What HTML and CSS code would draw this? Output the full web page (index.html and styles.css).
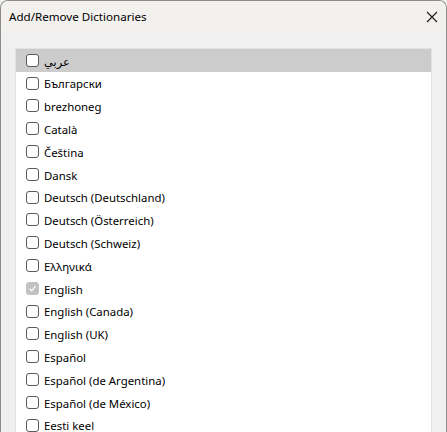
FILE: index.html
```html
<!DOCTYPE html>
<html lang="en">
<head>
  <meta charset="UTF-8">
  <title>Add/Remove Dictionaries</title>
  <link rel="stylesheet" href="styles.css">
</head>
<body>

  <div class="window">
    <div class="titlebar">
      <span class="title">Add/Remove Dictionaries</span>
      <svg class="close" width="12" height="12" viewBox="0 0 12 12">
        <path d="M1 1 L11 11 M11 1 L1 11" stroke="#1a1a1a" stroke-width="1.1" fill="none"/>
      </svg>
    </div>

    <div class="content">
      <div class="dict-list">
        <div class="row selected"><span class="box"></span><span class="label" dir="rtl">عربي</span></div>
        <div class="row"><span class="box"></span><span class="label">Български</span></div>
        <div class="row"><span class="box"></span><span class="label">brezhoneg</span></div>
        <div class="row"><span class="box"></span><span class="label">Català</span></div>
        <div class="row"><span class="box"></span><span class="label">Čeština</span></div>
        <div class="row"><span class="box"></span><span class="label">Dansk</span></div>
        <div class="row"><span class="box"></span><span class="label">Deutsch (Deutschland)</span></div>
        <div class="row"><span class="box"></span><span class="label">Deutsch (Österreich)</span></div>
        <div class="row"><span class="box"></span><span class="label">Deutsch (Schweiz)</span></div>
        <div class="row"><span class="box"></span><span class="label">Ελληνικά</span></div>
        <div class="row"><span class="box checked">
          <svg width="9" height="9" viewBox="0 0 9 9"><path d="M1.5 4.8 L3.6 6.8 L7.6 2.2" stroke="#fff" stroke-width="1.2" fill="none"/></svg>
        </span><span class="label">English</span></div>
        <div class="row"><span class="box"></span><span class="label">English (Canada)</span></div>
        <div class="row"><span class="box"></span><span class="label">English (UK)</span></div>
        <div class="row"><span class="box"></span><span class="label">Español</span></div>
        <div class="row"><span class="box"></span><span class="label">Español (de Argentina)</span></div>
        <div class="row"><span class="box"></span><span class="label">Español (de México)</span></div>
        <div class="row"><span class="box"></span><span class="label">Eesti keel</span></div>
      </div>
    </div>
  </div>

</body>
</html>
```

FILE: styles.css
```css
html, body {
  margin: 0;
  padding: 0;
  background: #f0f0f0;
}

body {
  font-family: "Noto Sans", "DejaVu Sans", sans-serif;
  font-size: 11.4px;
  color: #000;
}

.window {
  width: 447px;
  height: 432px;
  box-sizing: border-box;
  border: 1px solid #8c8c8c;
  border-bottom: none;
  border-radius: 8px 8px 0 0;
  overflow: hidden;
  background: #f0f0f0;
  display: flex;
  flex-direction: column;
}

.titlebar {
  height: 30px;
  flex: none;
  background: #f3f1ee;
  display: flex;
  align-items: center;
  justify-content: space-between;
  padding: 1px 8px 0 8px;
  box-sizing: border-box;
}

.title {
  font-size: 11.6px;
  color: #000;
}

.content {
  flex: 1;
  padding: 17px 14px 0 14px;
  overflow: hidden;
}

.dict-list {
  background: #fff;
  border: 1px solid #e2e2e2;
  border-bottom: none;
  height: 100%;
  overflow: hidden;
}

.row {
  height: 22.8px;
  display: flex;
  align-items: center;
  padding-left: 10px;
}

.row.selected {
  background: #cccccc;
}

.box {
  width: 11px;
  height: 11px;
  border: 1px solid #5a5a5a;
  border-radius: 3px;
  background: #fff;
  margin-right: 5px;
  flex: none;
  display: flex;
  align-items: center;
  justify-content: center;
}

.box.checked {
  background: #c2c2c2;
  border-color: #c2c2c2;
}

.label {
  white-space: nowrap;
  line-height: 1;
  padding-top: 2px;
}
```
